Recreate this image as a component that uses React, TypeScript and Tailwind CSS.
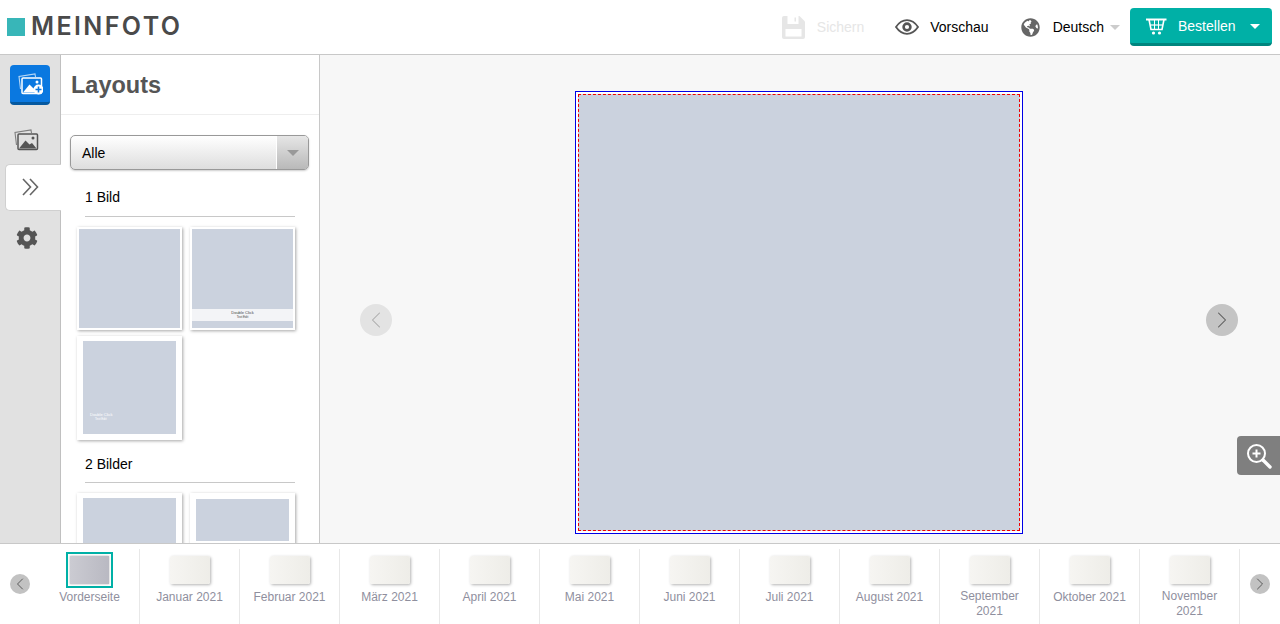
import React from 'react';
import { ChevronLeft, ChevronRight } from 'lucide-react';
import { FaCog, FaGlobeAmericas } from 'react-icons/fa';

const months = [
  'Januar 2021', 'Februar 2021', 'März 2021', 'April 2021', 'Mai 2021', 'Juni 2021',
  'Juli 2021', 'August 2021', 'September 2021', 'Oktober 2021', 'November 2021',
];

function Caret({ className }: { className: string }) {
  return <span className={`w-0 h-0 border-x-[5px] border-x-transparent border-t-[5px] ${className}`} />;
}

function SaveIcon() {
  return (
    <svg width="23" height="23" viewBox="0 0 23 23">
      <path d="M2 0h15.500L23 5.500V21a2 2 0 0 1-2 2H2a2 2 0 0 1-2-2V2a2 2 0 0 1 2-2z" fill="#e6e6e6" />
      <rect x="5.500" y="0" width="11" height="8" fill="white" />
      <rect x="12.500" y="1.500" width="1.500" height="4" fill="#e6e6e6" />
      <rect x="3.500" y="13" width="16" height="7.500" fill="white" />
    </svg>
  );
}

function EyeIcon() {
  return (
    <svg width="24" height="16" viewBox="0 0 24 16" fill="none" stroke="#555555">
      <path d="M1 8c3-4.400 6.700-6.800 11-6.800S20 3.600 23 8c-3 4.400-6.700 6.800-11 6.800S4 12.400 1 8z" strokeWidth="1.800" />
      <circle cx="12" cy="8" r="3.400" strokeWidth="2.600" />
    </svg>
  );
}

function CartIcon() {
  return (
    <svg width="21" height="17" viewBox="0 0 21 17" fill="none" stroke="white">
      <path d="M0 1.500h20.500" strokeWidth="2" />
      <path d="M3 1.500l2 10h11l2-10" strokeWidth="1.600" />
      <path d="M4.500 7h12" strokeWidth="1.200" />
      <path d="M8.500 2v9M12.500 2v9" strokeWidth="1" />
      <circle cx="7.500" cy="15" r="1.600" fill="white" stroke="none" />
      <circle cx="13.500" cy="15" r="1.600" fill="white" stroke="none" />
    </svg>
  );
}

function PhotosIcon({ color, plus }: { color: string; plus?: boolean }) {
  return (
    <svg width="25" height="22" viewBox="0 0 25 22" fill="none">
      <path d="M2.500 16L1 3.500 17 1l.500 3" stroke={color} strokeWidth="1.100" opacity="0.7" />
      <rect x="4" y="5" width="19.500" height="15.500" rx="1" stroke={color} strokeWidth="1.500" />
      <path d="M5 19.500l6.500-8 4 4 2.500-1.500 4.500 5.500z" fill={color} />
      <circle cx="19" cy="9" r="1.500" fill={color} />
      {plus && (
        <>
          <circle cx="20.500" cy="16.500" r="5" fill="white" />
          <path d="M17.500 16.500h6M20.500 13.500v6" stroke="#0a78e0" strokeWidth="1.600" />
        </>
      )}
    </svg>
  );
}

function Thumb({ children, className }: { children: React.ReactNode; className: string }) {
  return (
    <div className={`w-[105px] bg-white shadow-[1px_1px_3px_rgba(0,0,0,0.35)] shrink-0 ${className}`}>
      {children}
    </div>
  );
}

function GroupTitle({ label }: { label: string }) {
  return (
    <div className="h-full mx-[24px] border-b border-[#c8c8c8] text-sm text-black leading-[20px]">
      {label}
    </div>
  );
}

function Header() {
  return (
    <header className="h-[55px] shrink-0 border-b border-[#c8c8c8] bg-white flex items-center">
      <div className="w-[18px] h-[18px] ml-[7px] mt-[-1px] bg-[#38b6b8]" />
      <span className="ml-[6px] mt-[-1px] font-['Inter',sans-serif] font-semibold text-[25px] leading-none tracking-[2.4px] text-[#4a4a4a]">
        MEINFOTO
      </span>
      <div className="ml-auto flex items-center pr-[8px]">
        <SaveIcon />
        <span className="ml-[12px] text-sm text-[#e6e6e6]">Sichern</span>
        <span className="ml-[31px]">
          <EyeIcon />
        </span>
        <span className="ml-[11px] text-sm text-black">Vorschau</span>
        <FaGlobeAmericas className="ml-[32px]" size={19} color="#666" />
        <span className="ml-[13px] text-sm text-black">Deutsch</span>
        <Caret className="ml-[6px] border-t-[#cccccc]" />
        <button className="ml-[10px] w-[142px] h-[38px] mt-[-1px] pt-[2px] pl-[16px] pr-[12px] flex items-center rounded-[4px] bg-[#00b0a6] border-b-[3px] border-[#00857e] text-sm text-white">
          <CartIcon />
          <span className="ml-[11px]">Bestellen</span>
          <Caret className="ml-auto border-t-white" />
        </button>
      </div>
    </header>
  );
}

function Sidebar() {
  return (
    <aside className="w-[61px] shrink-0 bg-[#e1e1e1] border-r border-[#c0c0c0] flex flex-col pt-[10px]">
      <button className="ml-[10px] w-[40px] h-[40px] rounded-[4px] bg-[#0a78e0] border-b-[3px] border-[#05589f] flex items-center justify-center">
        <PhotosIcon color="white" plus />
      </button>
      <div className="ml-[14px] mt-[22px] h-[25px] flex items-center">
        <PhotosIcon color="#555" />
      </div>
      <div className="ml-[5px] mr-[-1px] mt-[12px] h-[47px] relative z-10 rounded-l-[5px] bg-white border border-r-0 border-[#d0d0d0] flex items-center pl-[16px]">
        <svg className="mb-[2px]" width="17" height="18" viewBox="0 0 17 18" fill="none" stroke="#666666" strokeWidth="1.600">
          <path d="M1 1l7.500 8L1 17M8 1l7.500 8L8 17" />
        </svg>
      </div>
      <FaCog className="ml-[16px] mt-[16px]" size={22} color="#555" />
    </aside>
  );
}

function Panel() {
  return (
    <section className="w-[259px] shrink-0 bg-white border-r border-[#c8c8c8] overflow-hidden">
      <div className="h-[60px] border-b border-[#eeeeee] pl-[10px] pt-[2px] flex items-center">
        <h1 className="text-[23.5px] font-bold text-[#555555]">Layouts</h1>
      </div>
      <div className="ml-[9px] mt-[20px] w-[239px] h-[35px] flex rounded-[5px] border border-[#999999] shadow-[0_1px_2px_rgba(0,0,0,0.2)] bg-linear-to-b from-white to-[#dedede] overflow-hidden">
        <span className="flex-1 pl-[11px] text-sm leading-[35px] text-black">Alle</span>
        <span className="w-[32px] border-l border-white bg-linear-to-b from-[#e6e6e6] to-[#b9b9b9] flex items-center justify-center">
          <span className="w-0 h-0 border-x-[6px] border-x-transparent border-t-[6px] border-t-[#999999]" />
        </span>
      </div>
      <div className="mt-[17px] h-[30px]">
        <GroupTitle label="1 Bild" />
      </div>
      <div className="ml-[16px] mt-[10px] w-[226px] flex flex-wrap gap-x-[8px] gap-y-[6px]">
        <Thumb className="h-[103px] p-[2px]">
          <div className="h-[99px] bg-[#cbd2de]" />
        </Thumb>
        <Thumb className="h-[103px] p-[2px]">
          <div className="h-[99px] bg-[#cbd2de] pt-[80px]">
            <div className="h-[12px] bg-[#f3f4f7] text-center text-[#444444] text-[4px] leading-[5px] pt-[1px]">
              <div>Double Click</div>
              <div className="text-[3px] leading-[4px]">Text Edit</div>
            </div>
          </div>
        </Thumb>
        <Thumb className="h-[104px] px-[6px] py-[5px]">
          <div className="h-[93px] bg-[#cbd2de] pt-[71px] pl-[7px] text-white text-[4px] leading-[5px]">
            <div>Double Click</div>
            <div className="pl-[5px] text-[3px] leading-[4px]">Text Edit</div>
          </div>
        </Thumb>
      </div>
      <div className="mt-[14px] h-[29px]">
        <GroupTitle label="2 Bilder" />
      </div>
      <div className="ml-[16px] mt-[10px] flex gap-x-[8px]">
        <Thumb className="h-[100px] px-[6px] py-[5px]">
          <div className="h-[90px] bg-[#cbd2de]" />
        </Thumb>
        <Thumb className="h-[100px] px-[6px] py-[6px]">
          <div className="h-[42px] bg-[#cbd2de]" />
        </Thumb>
      </div>
    </section>
  );
}

function Canvas() {
  return (
    <main className="relative flex-1 bg-[#f7f7f7] flex justify-between items-start pl-[40px] pr-[42px]">
      <button className="mt-[249px] w-[32px] h-[32px] rounded-full bg-[#e3e3e3] flex items-center justify-center">
        <ChevronLeft size={28} strokeWidth={0.9} color="#aaaaaa" />
      </button>
      <div className="mt-[36px] w-[448px] h-[443px] border border-[#0000e6] bg-white p-[2px]">
        <div className="h-full border border-dashed border-[#f00000] bg-[#cbd2de]" />
      </div>
      <button className="mt-[249px] w-[32px] h-[32px] rounded-full bg-[#c4c4c4] flex items-center justify-center">
        <ChevronRight size={28} strokeWidth={0.9} color="#555555" />
      </button>
      <div className="absolute right-0 top-[381px] w-[43px] h-[39px] rounded-l-[4px] bg-[#7f7f7f] flex items-center justify-center">
        <svg width="26" height="26" viewBox="0 0 26 26" fill="none" stroke="white">
          <circle cx="10.500" cy="10.500" r="8.500" strokeWidth="2" />
          <path d="M6.500 10.500h8M10.500 6.500v8" strokeWidth="2" />
          <path d="M17 17l7 7" strokeWidth="3.400" strokeLinecap="round" />
        </svg>
      </div>
    </main>
  );
}

function Filmstrip() {
  return (
    <footer className="h-[81px] shrink-0 border-t border-[#c8c8c8] bg-white flex items-start">
      <button className="ml-[10px] mt-[30px] w-[20px] h-[20px] rounded-full bg-[#c2c2c2] flex items-center justify-center">
        <ChevronLeft size={20} strokeWidth={1} color="#444444" />
      </button>
      <div className="ml-[10px] mt-[5px] flex">
        <div className="w-[100px] h-[76px] border-r border-[#e8e8e8] flex flex-col items-center">
          <div className="mt-[3px] w-[47px] h-[36px] border-2 border-[#00b0a6] p-[2px]">
            <div className="h-full bg-linear-to-r from-[#cbcbd2] to-[#b9b9c2] shadow-[0_0_2px_rgba(0,0,0,0.3)]" />
          </div>
          <span className="mt-[2px] text-xs leading-[15px] text-[#8f8f9e] text-center">Vorderseite</span>
        </div>
        {months.map((month) => (
          <div key={month} className="w-[100px] h-[76px] border-r border-[#e8e8e8] flex flex-col items-center">
            <div className="mt-[7px] w-[40px] h-[28px] rounded-[2px] bg-linear-to-r from-[#f6f5f2] to-[#eeede8] shadow-[1px_1px_3px_rgba(0,0,0,0.3)] shrink-0" />
            <span className={`${month.length > 12 ? 'mt-[5px]' : 'mt-[6px]'} px-[10px] text-xs leading-[15px] text-[#8f8f9e] text-center`}>{month}</span>
          </div>
        ))}
      </div>
      <button className="ml-[10px] mt-[30px] w-[20px] h-[20px] rounded-full bg-[#c2c2c2] flex items-center justify-center">
        <ChevronRight size={20} strokeWidth={1} color="#444444" />
      </button>
    </footer>
  );
}

export default function App() {
  return (
    <div className="w-[1280px] h-[624px] flex flex-col overflow-hidden font-['Liberation_Sans',Arial,sans-serif]">
      <Header />
      <div className="flex-1 min-h-0 flex">
        <Sidebar />
        <Panel />
        <Canvas />
      </div>
      <Filmstrip />
    </div>
  );
}
